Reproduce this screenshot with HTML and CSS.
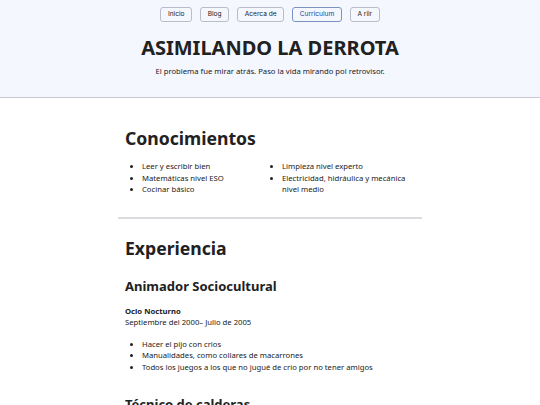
FILE: index.html
```html
<!DOCTYPE html>
<html lang="es">
<head>
<meta charset="utf-8">
<title>Asimilando la derrota</title>
<link rel="stylesheet" href="styles.css">
</head>
<body>
<header class="site-header">
  <nav class="nav">
    <a class="nav-link" href="#">Inicio</a>
    <a class="nav-link" href="#">Blog</a>
    <a class="nav-link" href="#">Acerca de</a>
    <a class="nav-link current" href="#">Curriculum</a>
    <a class="nav-link" href="#">A riir</a>
  </nav>
  <h1 class="site-title">ASIMILANDO LA DERROTA</h1>
  <p class="tagline">El problema fue mirar atrás. Paso la vida mirando pol retrovisor.</p>
</header>
<main class="content">
  <section class="section">
    <h2 class="section-title">Conocimientos</h2>
    <div class="skills">
      <ul class="list">
        <li>Leer y escribir bien</li>
        <li>Matemáticas nivel ESO</li>
        <li>Cocinar básico</li>
      </ul>
      <ul class="list">
        <li>Limpieza nivel experto</li>
        <li>Electricidad, hidráulica y mecánica nivel medio</li>
      </ul>
    </div>
  </section>
  <hr class="divider">
  <section class="section">
    <h2 class="section-title exp">Experiencia</h2>
    <h3 class="job-title">Animador Sociocultural</h3>
    <p class="job-meta"><strong>Ocio Nocturno</strong><br>Septiembre del 2000– Julio de 2005</p>
    <ul class="list job-tasks">
      <li>Hacer el pijo con crios</li>
      <li>Manualidades, como collares de macarrones</li>
      <li>Todos los juegos a los que no jugué de crio por no tener amigos</li>
    </ul>
    <h3 class="job-title next">Técnico de calderas</h3>
  </section>
</main>
</body>
</html>
```
FILE: styles.css
```css
html, body {
  margin: 0;
  padding: 0;
  background: #ffffff;
  color: #212121;
  font-family: "Noto Sans", "Open Sans", sans-serif;
  font-size: 7.7px;
  line-height: 1.5;
}

.site-header {
  background: #f5f7ff;
  border-bottom: 1px solid #c9c9d3;
  padding: 7px 0 0;
  height: 90px;
  box-sizing: content-box;
  text-align: center;
}

.nav {
  display: flex;
  justify-content: center;
  gap: 8px;
}

.nav-link {
  display: block;
  font-family: "Inter", "Noto Sans", sans-serif;
  font-size: 6.6px;
  line-height: 13px;
  padding: 0 6.6px;
  border: 1px solid #b8bccb;
  border-radius: 3px;
  color: #212121;
  text-decoration: none;
  background: #f5f7ff;
}

.nav-link.current {
  color: #0d47a1;
  border-color: #7b93c4;
}

.site-title {
  margin: 13px 0 0;
  font-size: 20px;
  line-height: 26px;
  font-weight: 700;
}

.tagline {
  margin: 4px 0 0;
  font-size: 7.7px;
  line-height: 12px;
}

.content {
  width: 304px;
  margin: 0 auto;
  padding: 0;
}

.section {
  padding: 0 7px;
}

.section-title {
  margin: 28px 0 0;
  font-size: 17.6px;
  line-height: 24px;
  font-weight: 700;
}

.section-title.exp {
  margin-top: 17px;
}

.skills {
  display: grid;
  grid-template-columns: 140px 1fr;
  margin-top: 11px;
}

.list {
  margin: 0;
  padding-left: 17px;
  list-style: disc;
}

.list li {
  line-height: 11.5px;
}

.divider {
  border: 0;
  border-top: 2px solid #dcdce0;
  margin: 21px 0 0;
}

.job-title {
  margin: 17px 0 0;
  font-size: 13px;
  line-height: 18px;
  font-weight: 700;
}

.job-title.next {
  margin-top: 22px;
}

.job-meta {
  margin: 11px 0 0;
  line-height: 11.5px;
}

.job-tasks {
  margin-top: 10px;
}
```
